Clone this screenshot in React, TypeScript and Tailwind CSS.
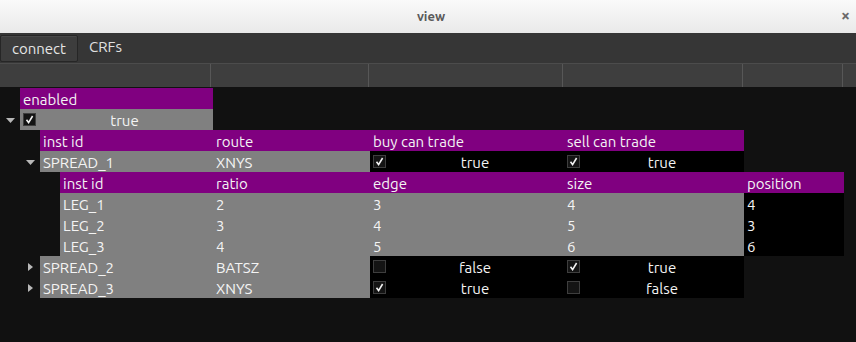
import type { ReactNode } from "react";

const FONT = "font-['Ubuntu','Open_Sans','Noto_Sans',sans-serif]";

// column right edges: 213, 370, 564, 744, 844
const COLS = [157, 194, 180, 100];

type Arrow = "down" | "right" | null;

function Toggle({ dir }: { dir: Arrow }) {
  if (!dir) return <span className="w-5 shrink-0" />;
  return (
    <span className="flex w-5 shrink-0 items-center justify-center">
      {dir === "down" ? (
        <svg width="9" height="5" viewBox="0 0 9 5" className="mt-[1px]">
          <path d="M0 0h9L4.5 5z" fill="#b8b8b8" />
        </svg>
      ) : (
        <svg width="5" height="8" viewBox="0 0 5 8" className="ml-[1px]">
          <path d="M0 0v8l5-4z" fill="#b8b8b8" />
        </svg>
      )}
    </span>
  );
}

function Check({ on }: { on: boolean }) {
  return (
    <span className="flex h-[13px] w-[13px] shrink-0 items-center justify-center border border-[#3e3e3e] bg-[#141414]">
      {on && (
        <svg width="9" height="9" viewBox="0 0 9 9">
          <path d="M1.5 4.8 3.6 7.6 7.6 1" fill="none" stroke="#f2f2f2" strokeWidth="1.6" />
        </svg>
      )}
    </span>
  );
}

function BoolCell({ on, w, bg = "bg-black" }: { on: boolean; w: number; bg?: string }) {
  return (
    <div className={`flex h-full items-center pl-[3px] ${bg}`} style={{ width: w }}>
      <Check on={on} />
      <span className="flex-1 pt-[1px] text-center">{on ? "true" : "false"}</span>
    </div>
  );
}

function Cell({ w, children, bg = "" }: { w: number; children?: ReactNode; bg?: string }) {
  return (
    <div className={`flex h-full items-center truncate pl-[3px] pt-[1px] ${bg}`} style={{ width: w }}>
      {children}
    </div>
  );
}

function Row({ indent, dir = null, children }: { indent: number; dir?: Arrow; children: ReactNode }) {
  return (
    <div className="flex h-[21px] items-stretch">
      <div className="flex shrink-0 items-center justify-end" style={{ width: indent }}>
        <Toggle dir={dir} />
      </div>
      {children}
    </div>
  );
}

export default function App() {
  const purple = "bg-[#800080]";
  const gray = "bg-[#808080]";

  return (
    <div className={`flex h-[342px] w-[856px] flex-col overflow-hidden bg-[#111111] text-[15px] leading-none text-[#f4f4f4] ${FONT}`}>
      {/* title bar */}
      <div className="relative flex h-[33px] shrink-0 items-center justify-center bg-gradient-to-b from-[#fafafa] to-[#e9e9e9]">
        <span className="ml-[6px] text-[13px] font-bold text-[#5a5a5a]">view</span>
        <span className="absolute right-[6px] top-[7px] text-[16px] font-bold leading-none text-[#6a6a6a]">×</span>
      </div>

      {/* toolbar */}
      <div className="flex h-[30px] shrink-0 items-center bg-[#363636]">
        <button className="h-[27px] w-[78px] rounded-[2px] border border-[#262626] bg-[#3d3d3d] pt-[1px] text-[#e6e6e6] shadow-[inset_0_1px_0_#484848]">
          connect
        </button>
        <span className="ml-[11px] -mt-[3px] text-[#e0e0e0]">CRFs</span>
      </div>

      {/* column header */}
      <div className="flex h-[24px] shrink-0 border-t border-[#4c4c4c] bg-[#3e3e3e]">
        {[211, 158, 194, 180, 100].map((w, i) => (
          <div key={i} className="h-full border-r border-[#575757]" style={{ width: w }} />
        ))}
      </div>

      {/* tree */}
      <div className="pt-[1px]">
        <Row indent={20}>
          <Cell w={193} bg={purple}>enabled</Cell>
        </Row>
        <Row indent={20} dir="down">
          <BoolCell on w={193} bg={gray} />
        </Row>

        <Row indent={40}>
          <Cell w={173} bg={purple}>inst id</Cell>
          <Cell w={COLS[0]} bg={purple}>route</Cell>
          <Cell w={COLS[1]} bg={purple}>buy can trade</Cell>
          <Cell w={COLS[2]} bg={purple}>sell can trade</Cell>
        </Row>
        <Row indent={40} dir="down">
          <Cell w={173} bg={gray}>SPREAD_1</Cell>
          <Cell w={COLS[0]} bg={gray}>XNYS</Cell>
          <BoolCell on w={COLS[1]} />
          <BoolCell on w={COLS[2]} />
        </Row>

        <Row indent={60}>
          <Cell w={153} bg={purple}>inst id</Cell>
          <Cell w={COLS[0]} bg={purple}>ratio</Cell>
          <Cell w={COLS[1]} bg={purple}>edge</Cell>
          <Cell w={COLS[2]} bg={purple}>size</Cell>
          <Cell w={COLS[3]} bg={purple}>position</Cell>
        </Row>
        {[
          ["LEG_1", "2", "3", "4", "4"],
          ["LEG_2", "3", "4", "5", "3"],
          ["LEG_3", "4", "5", "6", "6"],
        ].map((r) => (
          <Row key={r[0]} indent={60}>
            <Cell w={153} bg={gray}>{r[0]}</Cell>
            <Cell w={COLS[0]} bg={gray}>{r[1]}</Cell>
            <Cell w={COLS[1]} bg={gray}>{r[2]}</Cell>
            <Cell w={COLS[2]} bg={gray}>{r[3]}</Cell>
            <Cell w={COLS[3]} bg="bg-black">{r[4]}</Cell>
          </Row>
        ))}

        <Row indent={40} dir="right">
          <Cell w={173} bg={gray}>SPREAD_2</Cell>
          <Cell w={COLS[0]} bg={gray}>BATSZ</Cell>
          <BoolCell on={false} w={COLS[1]} />
          <BoolCell on w={COLS[2]} />
        </Row>
        <Row indent={40} dir="right">
          <Cell w={173} bg={gray}>SPREAD_3</Cell>
          <Cell w={COLS[0]} bg={gray}>XNYS</Cell>
          <BoolCell on w={COLS[1]} />
          <BoolCell on={false} w={COLS[2]} />
        </Row>
      </div>
    </div>
  );
}
